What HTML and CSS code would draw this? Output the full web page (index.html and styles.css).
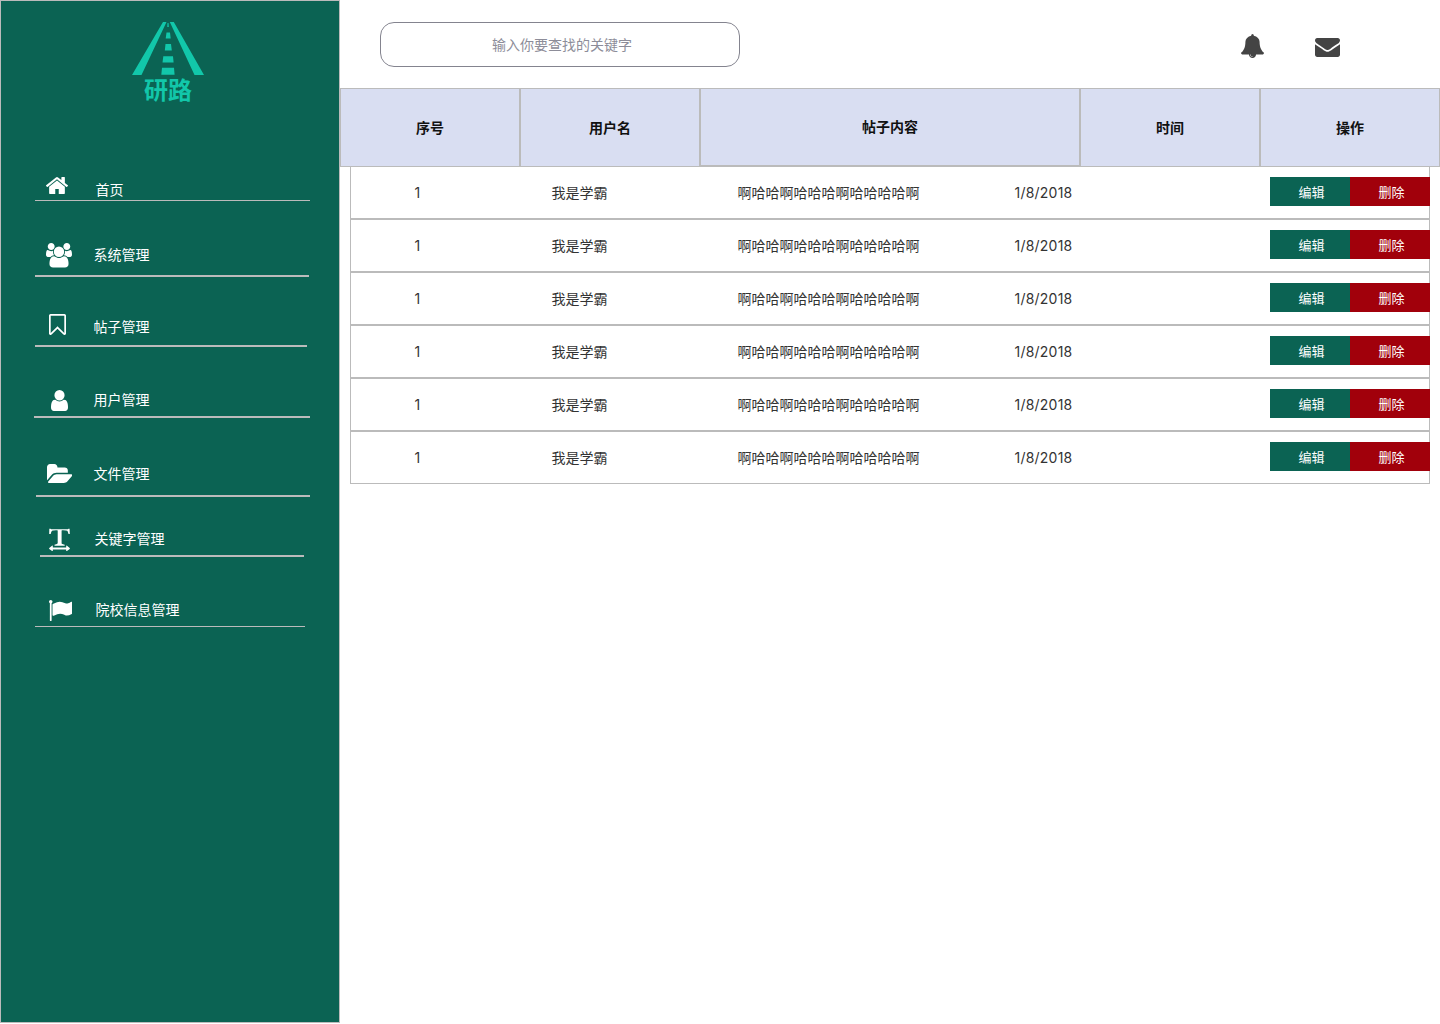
FILE: index.html
```html
<!DOCTYPE html>
<html lang="zh-CN">
<head>
<meta charset="utf-8">
<title>研路 - 帖子管理</title>
<link rel="stylesheet" href="styles.css">
</head>
<body>
<div class="app">
  <aside class="sidebar">
    <div class="logo">
      <svg class="logo-road" viewBox="0 0 72 53"><path d="M31 0h3.500L9.500 53H0zM37.800 0h4L72 53h-9.500zM35.500 1h1l.3 4h-1.500zM34.500 10.500h3.500l.7 6h-5zM33.500 22h5.500l.8 6.500h-7zM31.300 34.200h9.700l.6 6.300H30.500zM30 45.700h12l.6 7H29.300z"/></svg>
      <span class="logo-name">研路</span>
    </div>
    <ul class="nav">
      <li class="nav-item home">
        <svg class="nav-icon" viewBox="90 250 1612 1286" preserveAspectRatio="none"><path d="M1472 992v480q0 26-19 45t-45 19h-384v-384h-256v384h-384q-26 0-45-19t-19-45v-480q0-1 .5-3t.5-3l575-474 575 474q1 2 1 6zm223-69l-62 74q-8 9-21 11h-3q-13 0-21-7l-692-577-692 577q-12 8-24 7-13-2-21-11l-62-74q-8-10-7-23.500t11-21.500l719-599q32-26 76-26t76 26l244 204v-195q0-14 9-23t23-9h192q14 0 23 9t9 23v408l219 182q10 8 11 21.500t-7 23.500z"/></svg>
        <span class="nav-label">首页</span>
      </li>
      <li class="nav-item system">
        <svg class="nav-icon" viewBox="0 0 1920 1792" preserveAspectRatio="none"><path d="M593 896q-162 5-265 128h-134q-82 0-138-40.500t-56-118.500q0-353 124-353 6 0 43.500 21t97.500 42.500 119 21.500q67 0 133-23-5 37-5 66 0 139 81 256zm1071 637q0 120-73 189.500t-194 69.500h-874q-121 0-194-69.500t-73-189.500q0-53 3.500-103.500t14-109 26.500-108.500 43-97.500 62-81 85.500-53.500 111.500-20q10 0 43 21.500t73 48 107 48 135 21.500 135-21.500 107-48 73-48 43-21.500q61 0 111.500 20t85.500 53.500 62 81 43 97.500 26.500 108.500 14 109 3.500 103.500zm-1024-1277q0 106-75 181t-181 75-181-75-75-181 75-181 181-75 181 75 75 181zm704 384q0 159-112.500 271.500t-271.500 112.500-271.500-112.500-112.500-271.500 112.500-271.500 271.500-112.500 271.500 112.500 112.500 271.500zm576 225q0 78-56 118.500t-138 40.500h-134q-103-123-265-128 81-117 81-256 0-29-5-66 66 23 133 23 59 0 119-21.500t97.500-42.500 43.500-21q124 0 124 353zm-128-609q0 106-75 181t-181 75-181-75-75-181 75-181 181-75 181 75 75 181z"/></svg>
        <span class="nav-label">系统管理</span>
      </li>
      <li class="nav-item posts">
        <svg class="nav-icon" viewBox="256 128 1280 1512" preserveAspectRatio="none"><path d="M1408 256h-1024v1242l423-406 89-85 89 85 423 406v-1242zm12-128q23 0 44 9 33 13 52.500 41t19.500 62v1289q0 34-19.500 62t-52.500 41q-19 8-44 8-48 0-83-32l-441-424-441 424q-36 33-83 33-23 0-44-9-33-13-52.500-41t-19.500-62v-1289q0-34 19.500-62t52.500-41q21-9 44-9h1048z"/></svg>
        <span class="nav-label">帖子管理</span>
      </li>
      <li class="nav-item users">
        <svg class="nav-icon" viewBox="256 128 1280 1536" preserveAspectRatio="none"><path d="M1536 1399q0 109-62.500 187t-150.500 78h-854q-88 0-150.500-78t-62.500-187q0-85 8.500-160.500t31.500-152 58.500-131 94-89 134.500-34.500q131 128 313 128t313-128q76 0 134.500 34.500t94 89 58.500 131 31.500 152 8.500 160.500zm-256-887q0 159-112.500 271.500t-271.500 112.500-271.500-112.500-112.500-271.500 112.500-271.500 271.500-112.500 271.500 112.500 112.500 271.500z"/></svg>
        <span class="nav-label">用户管理</span>
      </li>
      <li class="nav-item files">
        <svg class="nav-icon" viewBox="0 128 1880 1408" preserveAspectRatio="none"><path d="M1879 952q0 31-31 66l-336 396q-43 51-120.500 86.500t-143.500 35.500h-1088q-34 0-60.500-13t-26.500-43q0-31 31-66l336-396q43-51 120.500-86.500t143.500-35.500h1088q34 0 60.500 13t26.500 43zm-343-344v160h-832q-94 0-197 47.500t-164 119.500l-337 396-5 6q0-4-.5-12.500t-.5-12.500v-960q0-92 66-158t158-66h320q92 0 158 66t66 158v32h544q92 0 158 66t66 158z"/></svg>
        <span class="nav-label">文件管理</span>
      </li>
      <li class="nav-item keywords">
        <svg class="nav-icon" viewBox="0 0 21 23"><path d="M.3.700h1.200l.7.500h16.600l.7-.5h1.100l.2 5.300h-1.300q-.5-2.500-1.200-3.200-.8-.6-5.300-.5-.4 0-.4.500v12.400q0 .6.700.9l2.400.7v1H5.500v-1l2.400-.7q.8-.3.800-1V2.800q0-.5-.5-.5-4.500-.1-5.200.5-.8.700-1.300 3.200H.2zM.3 20.100l3-2.500q.5-.3.500.3v1.500h13.400v-1.500q0-.6.500-.3l3 2.500q.4.400 0 .8l-3 2.300q-.5.300-.5-.3v-1.500H3.800v1.500q0 .6-.5.3l-3-2.300q-.4-.4 0-.8z"/></svg>
        <span class="nav-label">关键字管理</span>
      </li>
      <li class="nav-item schools">
        <svg class="nav-icon" viewBox="64 128 1728 1536" preserveAspectRatio="none"><path d="M320 256q0 72-64 110v1266q0 13-9.500 22.500t-22.500 9.500h-64q-13 0-22.500-9.500t-9.500-22.500v-1266q-64-38-64-110 0-53 37.500-90.500t90.500-37.500 90.500 37.500 37.500 90.500zm1472 64v763q0 25-12.500 38.500t-39.500 27.500q-215 116-369 116-61 0-123.500-22t-108.500-48-115.500-48-142.500-22q-192 0-464 146-17 9-33 9-26 0-45-19t-19-45v-742q0-32 31-55 21-14 79-43 236-120 421-120 107 0 200 29t219 88q38 19 88 19 54 0 117.500-21t110-47 88-47 54.500-21q26 0 45 19t19 45z"/></svg>
        <span class="nav-label">院校信息管理</span>
      </li>
    </ul>
  </aside>
  <main class="main">
    <header class="topbar">
      <input class="search" type="text" placeholder="输入你要查找的关键字">
      <div class="actions">
        <svg class="bell" viewBox="64 0 1664 1792" preserveAspectRatio="none"><path d="M912 1696q0-16-16-16-59 0-101.500-42.500t-42.500-101.500q0-16-16-16t-16 16q0 73 51.500 124.500t124.500 51.500q16 0 16-16zm816-288q0 52-38 90t-90 38h-448q0 106-75 181t-181 75-181-75-75-181h-448q-52 0-90-38t-38-90q50-42 91-88t85-119.500 74.500-158.500 50-206 19.500-260q0-152 117-282.500t307-158.500q-8-19-8-39 0-40 28-68t68-28 68 28 28 68q0 20-8 39 190 28 307 158.500t117 282.500q0 139 19.500 260t50 206 74.500 158.500 85 119.500 91 88z"/></svg>
        <svg class="mail" viewBox="0 256 1792 1408" preserveAspectRatio="none"><path d="M1792 710v794q0 66-47 113t-113 47h-1472q-66 0-113-47t-47-113v-794q44 49 101 87 362 246 497 345 57 42 92.500 65.500t94.500 48 110 24.500h2q51 0 110-24.500t94.500-48 92.500-65.500q170-123 498-345 57-39 100-87zm0-294q0 79-49 151t-122 123q-376 261-468 325-10 7-42.500 31t-54 38.500-52 32.500-57.500 27-50 9h-2q-23 0-50-9t-57.500-27-52-32.500-54-38.500-42.500-31q-91-64-262-182.500t-205-142.500q-62-42-117-115.500t-55-136.500q0-78 41.500-130t118.500-52h1472q65 0 112.500 47t47.500 113z"/></svg>
      </div>
    </header>
    <div class="table-head">
      <div class="th">序号</div>
      <div class="th">用户名</div>
      <div class="th th-content">帖子内容</div>
      <div class="th">时间</div>
      <div class="th">操作</div>
    </div>
    <div class="rows">
      <div class="row"><span>1</span><span>我是学霸</span><span>啊哈哈啊哈哈哈啊哈哈哈哈啊</span><span class="date">1/8/2018</span><div class="ops"><button class="edit">编辑</button><button class="delete">删除</button></div></div>
      <div class="row"><span>1</span><span>我是学霸</span><span>啊哈哈啊哈哈哈啊哈哈哈哈啊</span><span class="date">1/8/2018</span><div class="ops"><button class="edit">编辑</button><button class="delete">删除</button></div></div>
      <div class="row"><span>1</span><span>我是学霸</span><span>啊哈哈啊哈哈哈啊哈哈哈哈啊</span><span class="date">1/8/2018</span><div class="ops"><button class="edit">编辑</button><button class="delete">删除</button></div></div>
      <div class="row"><span>1</span><span>我是学霸</span><span>啊哈哈啊哈哈哈啊哈哈哈哈啊</span><span class="date">1/8/2018</span><div class="ops"><button class="edit">编辑</button><button class="delete">删除</button></div></div>
      <div class="row"><span>1</span><span>我是学霸</span><span>啊哈哈啊哈哈哈啊哈哈哈哈啊</span><span class="date">1/8/2018</span><div class="ops"><button class="edit">编辑</button><button class="delete">删除</button></div></div>
      <div class="row"><span>1</span><span>我是学霸</span><span>啊哈哈啊哈哈哈啊哈哈哈哈啊</span><span class="date">1/8/2018</span><div class="ops"><button class="edit">编辑</button><button class="delete">删除</button></div></div>
    </div>
  </main>
</div>
</body>
</html>
```
FILE: styles.css
```css
* { box-sizing: border-box; }

body {
  margin: 0;
  background: #fff;
  color: #333;
  font: 14px/20px Inter, "Noto Sans CJK SC", sans-serif;
}

button, input { font-family: inherit; }
svg { display: block; flex: none; fill: currentColor; }

.app { display: flex; width: 1440px; height: 1024px; overflow: hidden; }

/* Sidebar */
.sidebar {
  flex: none;
  width: 340px;
  height: 1023px;
  border: 1px solid #bbb;
  background: #0b6353;
  color: #fff;
}

.logo {
  display: flex;
  flex-direction: column;
  align-items: center;
  width: 72px;
  height: 104px;
  margin-left: 131px;
  padding-top: 21px;
  color: #12c7aa;
}
.logo-road { width: 72px; height: 53px; }
.logo-name {
  margin-top: 1px;
  font-size: 24px;
  font-weight: 700;
  line-height: 30px;
  white-space: nowrap;
}

.nav { margin: 0; padding: 0; list-style: none; }
.nav-item {
  display: flex;
  align-items: flex-start;
  border-bottom: 2px solid #bbb;
}
.nav-label { white-space: nowrap; }

.home { width: 275px; height: 36px; margin: 60px 0 0 34px; padding: 12px 0 0 10.5px; border-bottom-width: 1px; }
.home .nav-icon { width: 22px; height: 17px; }
.home .nav-label { margin: 3px 0 0 28px; }

.system { width: 274px; height: 46px; margin: 30px 0 0 34px; padding: 12px 0 0 10.5px; }
.system .nav-icon { width: 26px; height: 24.5px; }
.system .nav-label { margin: 2px 0 0 22px; }

.posts { width: 272px; height: 40px; margin: 30px 0 0 34px; padding: 7px 0 0 14px; }
.posts .nav-icon { width: 17px; height: 21px; }
.posts .nav-label { margin: 3px 0 0 27.5px; }

.users { width: 276px; height: 41px; margin: 30px 0 0 33px; padding: 13px 0 0 17px; }
.users .nav-icon { width: 17px; height: 21px; }
.users .nav-label { margin: 0 0 0 25.5px; }

.files { width: 274px; height: 49px; margin: 30px 0 0 35px; padding: 16px 0 0 10.5px; }
.files .nav-icon { width: 25.5px; height: 19px; }
.files .nav-label { margin: 0 0 0 21.5px; }

.keywords { width: 264px; height: 40px; margin: 20px 0 0 39px; padding: 11px 0 0 9px; }
.keywords .nav-icon { width: 21px; height: 23px; }
.keywords .nav-label { margin: 1px 0 0 24.5px; }

.schools { width: 270px; height: 40px; margin: 30px 0 0 34px; padding: 13px 0 0 13.5px; border-bottom-width: 1px; }
.schools .nav-icon { width: 23.5px; height: 21px; }
.schools .nav-label { margin: 0 0 0 23.5px; }

/* Top bar */
.main { flex: none; width: 1100px; }
.topbar {
  display: flex;
  justify-content: space-between;
  height: 88px;
  padding: 22px 100px 0 40px;
}
.search {
  width: 360px;
  height: 45px;
  padding: 0 0 0 4px;
  border: 1px solid #84848f;
  border-radius: 14px;
  background: #fff;
  font-size: 14px;
  text-align: center;
}
.search::placeholder { color: #8d8d99; opacity: 1; }
.actions { display: flex; gap: 51px; padding-top: 12px; color: #444; }
.bell { width: 23px; height: 24px; }
.mail { width: 25px; height: 19px; margin-top: 4px; }

/* Table */
.table-head {
  position: relative;
  z-index: 1;
  display: grid;
  grid-template-columns: 180px 180px 380px 180px 180px;
  align-items: start;
  height: 78px;
}
.th {
  display: flex;
  align-items: center;
  justify-content: center;
  height: 79px;
  border: 1px solid #bbb;
  background: #d9def2;
  color: #111;
  font-weight: 700;
}
.th-content { height: 78px; }

.rows { margin: 0 10px; }
.row {
  display: grid;
  grid-template-columns: 200.500px 186px 277px 254.500px 160px;
  height: 53px;
  border: 1px solid #bbb;
}
.row > span { padding-top: 16px; white-space: nowrap; }
.row > span:first-child { padding-left: 63.5px; }
.date { letter-spacing: .22px; }
.ops { display: flex; width: 160px; margin: 10px 0 0 1px; }
.ops button {
  width: 80px;
  height: 29px;
  padding: 1px 0 0 3px;
  border: 0;
  color: #fff;
  font-size: 13px;
  line-height: 28px;
}
.edit { background: #0b6353; }
.delete { background: #a1000b; }
```
